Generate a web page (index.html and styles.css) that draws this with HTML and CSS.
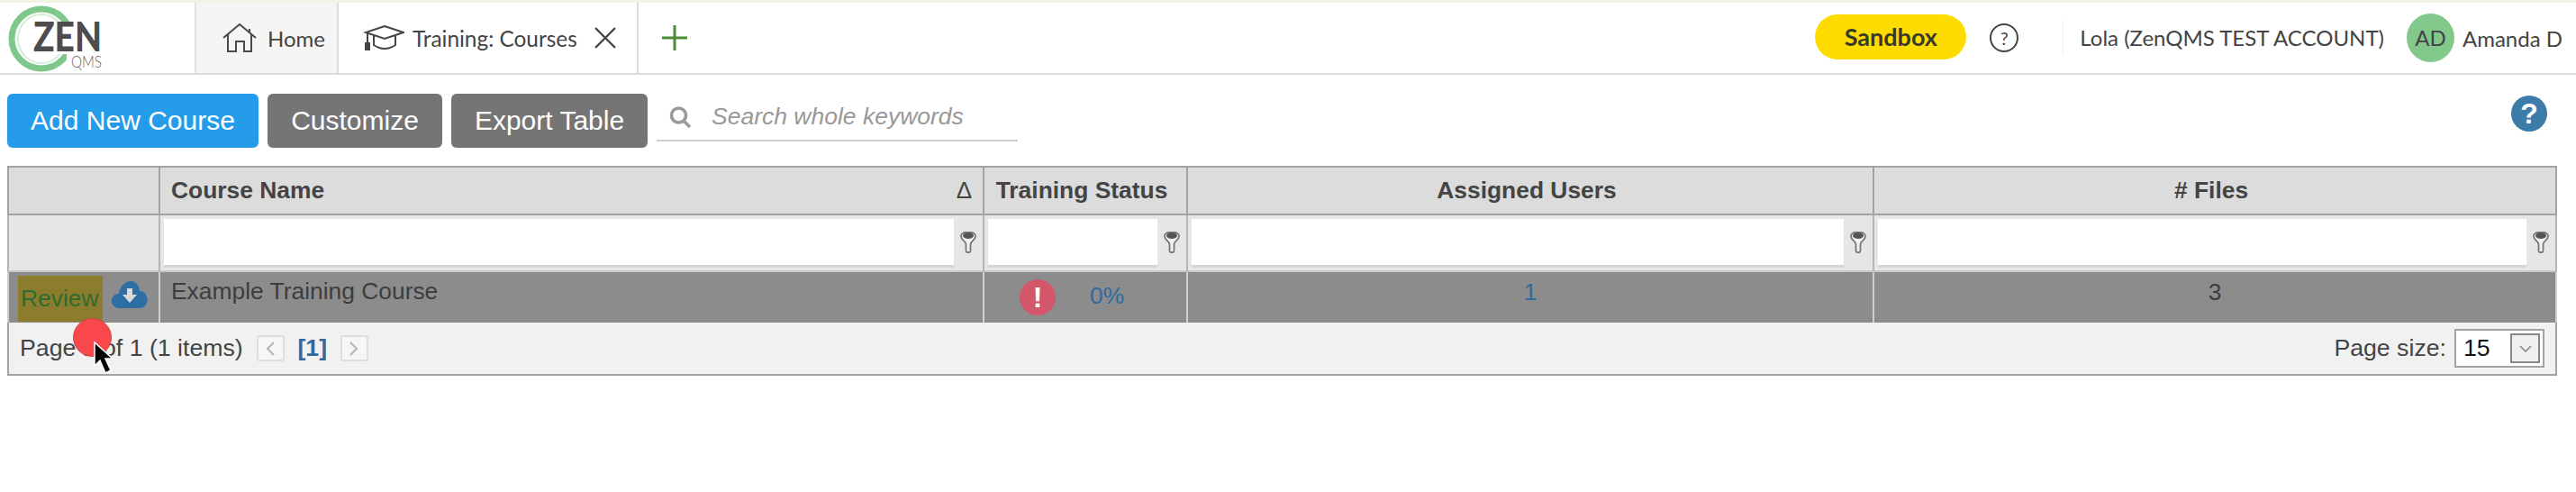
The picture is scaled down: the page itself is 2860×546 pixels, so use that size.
FILE: index.html
```html
<!DOCTYPE html>
<html lang="en">
<head>
  <meta charset="UTF-8" />
  <title>ZenQMS - Training: Courses</title>
  <link rel="stylesheet" href="styles.css">
</head>
<body>

  <!-- Top nav -->
  <header class="topbar">
    <div class="logo">
      <svg width="140" height="78" viewBox="0 0 140 78">
        <ellipse cx="46" cy="40" rx="33" ry="33" fill="none" stroke="#7ec88b" stroke-width="7"/>
        <ellipse cx="46" cy="40" rx="26" ry="27" fill="none" stroke="#d5ecd9" stroke-width="2"/>
        <rect x="34" y="21" width="82" height="36" fill="#fff"/>
        <rect x="74" y="57" width="42" height="20" fill="#fff"/>
        <text x="37" y="54" textLength="76" lengthAdjust="spacingAndGlyphs" class="logo-zen">ZEN</text>
        <text x="79" y="72" textLength="34" lengthAdjust="spacingAndGlyphs" class="logo-qms">QMS</text>
      </svg>
    </div>
    <div class="tab tab-home">
      <svg width="38" height="33" viewBox="0 0 38 33" fill="none" stroke="#4a4a4a" stroke-width="2">
        <path d="M1 16 L19 1 L37 16 M6 12 V31 H15 V20 H24 V31 H32 V12 M30 10 V6"/>
      </svg>
      <span>Home</span>
    </div>
    <div class="tab tab-active">
      <svg width="46" height="28" viewBox="0 0 46 28" fill="none" stroke="#444" stroke-width="2">
        <path d="M24 1 L45 8 L24 15 L3 8 Z M12 12 V22 Q24 30 36 22 V12 M5 9 V20"/>
        <path d="M3 20 H7 V27 H3 Z" fill="#444"/>
      </svg>
      <span>Training: Courses</span>
      <svg class="tab-close" width="26" height="26" viewBox="0 0 26 26" stroke="#444" stroke-width="2.4">
        <path d="M2 2 L24 24 M24 2 L2 24"/>
      </svg>
    </div>
    <div class="tab-add">
      <svg width="28" height="28" viewBox="0 0 28 28" stroke="#4f8a35" stroke-width="3">
        <path d="M14 0 V28 M0 14 H28"/>
      </svg>
    </div>
    <div class="nav-right">
      <div class="sandbox">Sandbox</div>
      <div class="help-ring">?</div>
      <div class="account">Lola (ZenQMS TEST ACCOUNT)</div>
      <div class="avatar">AD</div>
      <div class="user">Amanda D</div>
    </div>
  </header>

  <!-- Toolbar -->
  <div class="toolbar">
    <button class="btn btn-blue">Add New Course</button>
    <button class="btn btn-gray">Customize</button>
    <button class="btn btn-gray">Export Table</button>
    <div class="search">
      <svg width="25" height="24" viewBox="0 0 25 24" fill="none" stroke="#999" stroke-width="3.6">
        <circle cx="10.5" cy="10" r="8"/>
        <path d="M16 16 L23 23"/>
      </svg>
      <span>Search whole keywords</span>
    </div>
    <div class="help-solid">?</div>
  </div>

  <!-- Grid -->
  <table class="grid">
    <colgroup>
      <col class="c1"><col class="c2"><col class="c3"><col class="c4"><col class="c5">
    </colgroup>
    <tr class="head">
      <th></th>
      <th class="left"><div class="sort-cell"><span>Course Name</span><span class="sort">&#916;</span></div></th>
      <th>Training Status</th>
      <th>Assigned Users</th>
      <th># Files</th>
    </tr>
    <tr class="filters">
      <td></td>
      <td><div class="filter"><div class="filter-input"></div><svg class="funnel"><use href="#funnel"/></svg></div></td>
      <td><div class="filter"><div class="filter-input"></div><svg class="funnel"><use href="#funnel"/></svg></div></td>
      <td><div class="filter"><div class="filter-input"></div><svg class="funnel"><use href="#funnel"/></svg></div></td>
      <td><div class="filter"><div class="filter-input"></div><svg class="funnel"><use href="#funnel"/></svg></div></td>
    </tr>
    <tr class="row">
      <td class="actions">
        <div class="actions-in">
          <span class="review">Review</span>
          <svg class="cloud" width="40" height="30" viewBox="0 0 40 30">
            <path d="M9 30 C-3 30 -3 14 8 14 C8 6 16 0 21 0 C27 0 31 5 31 11 C42 11 43 30 31 30 Z" fill="#2f6ea5"/>
            <path d="M17 8 H23 V15 H28 L20 24 L12 15 H17 Z" fill="#d9d9d9"/>
          </svg>
        </div>
      </td>
      <td class="name">Example Training Course</td>
      <td>
        <div class="status">
          <div class="alert">!</div>
          <a class="link">0%</a>
        </div>
      </td>
      <td class="center"><a class="link">1</a></td>
      <td class="center">3</td>
    </tr>
    <tr class="pager">
      <td colspan="5">
        <div class="pager-in">
          <span>Page 1 of 1 (1 items)</span>
          <span class="page-btn">
            <svg width="10" height="16" viewBox="0 0 10 16" fill="none" stroke="#b5b5b5" stroke-width="2"><path d="M9 1 L2 8 L9 15"/></svg>
          </span>
          <span class="page-cur">[1]</span>
          <span class="page-btn">
            <svg width="10" height="16" viewBox="0 0 10 16" fill="none" stroke="#b5b5b5" stroke-width="2"><path d="M1 1 L8 8 L1 15"/></svg>
          </span>
          <span class="page-size">Page size:</span>
          <div class="select">
            <span>15</span>
            <div class="select-btn">
              <svg width="14" height="8" viewBox="0 0 14 8" fill="none" stroke="#888" stroke-width="1.6"><path d="M1 1 L7 7 L13 1"/></svg>
            </div>
          </div>
        </div>
      </td>
    </tr>
  </table>

  <!-- click marker from the screen recording -->
  <div class="click-dot"></div>
  <svg class="pointer" width="24" height="38" viewBox="0 0 24 38">
    <path d="M2 2 V28 L8 22 L14 36 L20 33 L14 20 L22 20 Z" fill="#000" stroke="#fff" stroke-width="1.5"/>
  </svg>

  <svg width="0" height="0" class="defs">
    <symbol id="funnel" viewBox="0 0 20 24">
      <path d="M2 5 C2 -1 18 -1 18 5 C18 10 13 10 12.5 14 V21 C12.5 24 7.5 24 7.5 21 V14 C7 10 2 10 2 5 Z" fill="#f2f2f2" stroke="#777" stroke-width="1.8"/>
      <ellipse cx="10" cy="4.5" rx="6" ry="3.5" fill="#555"/>
    </symbol>
  </svg>

</body>
</html>
```

FILE: styles.css
```css
* {
  margin: 0;
  padding: 0;
  box-sizing: border-box;
}

body {
  font-family: 'Liberation Sans', Arial, sans-serif;
  background: #fff;
  color: #444;
  overflow: hidden;
}

/* Top nav */
.topbar {
  display: flex;
  align-items: stretch;
  height: 83px;
  border-top: 3px solid #f3f3e3;
  border-bottom: 2px solid #dcdcdc;
  font-family: 'Lato', sans-serif;
}

.logo {
  width: 218px;
  border-right: 2px solid #e2e2e2;
}

.logo-zen {
  font-family: 'Lato', sans-serif;
  font-weight: 900;
  font-size: 45px;
  fill: #4d4d4f;
}

.logo-qms {
  font-family: 'Lato', sans-serif;
  font-weight: 300;
  font-size: 17px;
  fill: #666;
}

.tab {
  display: flex;
  align-items: center;
  font-size: 24px;
  color: #444;
}

.tab-home {
  width: 158px;
  padding-left: 29px;
  gap: 12px;
  background: #f5f5f5;
  border-right: 2px solid #dcdcdc;
}

.tab-active {
  width: 333px;
  padding-left: 27px;
  gap: 9px;
  font-size: 24.4px;
  background: #fff;
  border-right: 2px solid #dcdcdc;
}

.tab-close {
  margin-left: 9px;
}

.tab-add {
  display: flex;
  align-items: center;
  padding-left: 26px;
}

.nav-right {
  display: flex;
  align-items: center;
  margin-left: auto;
  padding-right: 15px;
}

.sandbox {
  width: 168px;
  height: 50px;
  line-height: 50px;
  margin-top: -2px;
  border-radius: 25px;
  background: #ffdc00;
  color: #3a3a2a;
  font-size: 27px;
  font-weight: 700;
  text-align: center;
}

.help-ring {
  width: 32px;
  height: 32px;
  line-height: 28px;
  margin-left: 26px;
  border: 2px solid #444;
  border-radius: 50%;
  font-size: 20px;
  text-align: center;
}

.account {
  height: 38px;
  line-height: 38px;
  margin-left: 49px;
  padding-left: 18px;
  border-left: 1px solid #eee;
  font-size: 24px;
}

.avatar {
  width: 53px;
  height: 54px;
  line-height: 54px;
  margin-left: 25px;
  border-radius: 50%;
  background: #82c88a;
  font-size: 24px;
  text-align: center;
}

.user {
  margin-left: 9px;
  font-size: 24px;
}

/* Toolbar */
.toolbar {
  display: flex;
  align-items: flex-start;
  height: 101px;
  padding: 21px 0 0 8px;
}

.btn {
  height: 60px;
  border: none;
  border-radius: 6px;
  color: #fff;
  font-family: 'Liberation Sans', Arial, sans-serif;
  font-size: 30px;
  text-align: center;
}

.btn-blue {
  width: 279px;
  background: #259cea;
}

.btn-gray {
  background: #757575;
  margin-left: 10px;
}

.btn-gray:nth-child(2) {
  width: 194px;
}

.btn-gray:nth-child(3) {
  width: 218px;
}

.search {
  display: flex;
  align-items: center;
  gap: 22px;
  width: 401px;
  height: 53px;
  margin-left: 10px;
  padding-left: 14px;
  border-bottom: 2px solid #cfcfcf;
  color: #999;
  font-size: 26.5px;
  font-style: italic;
}

.help-solid {
  width: 40px;
  height: 40px;
  line-height: 40px;
  margin: 2px 32px 0 auto;
  border-radius: 50%;
  background: #3d7ca8;
  color: #fff;
  font-size: 32px;
  font-weight: 700;
  text-align: center;
}

/* Grid */
.grid {
  table-layout: fixed;
  width: 2829px;
  margin-left: 8px;
  border-collapse: collapse;
  border: 2px solid #a3a3a3;
  font-size: 26.4px;
}

.c1 { width: 168px; }
.c2 { width: 915px; }
.c3 { width: 226px; }
.c4 { width: 762px; }
.c5 { width: 758px; }

.head th {
  height: 53px;
  padding-right: 8px;
  background: #dcdcdc;
  border: 2px solid #a3a3a3;
  color: #444;
  font-size: 26.4px;
  font-weight: 700;
  text-align: center;
}

.head th.left {
  padding: 0 12px;
  text-align: left;
}

.sort-cell {
  display: flex;
  justify-content: space-between;
}

.sort {
  font-size: 26px;
  font-weight: 400;
  line-height: 30px;
}

.filters td {
  height: 63px;
  background: #e6e6e6;
  border-left: 2px solid #b5b5b5;
  border-right: 2px solid #b5b5b5;
}

.filter {
  display: flex;
  align-items: center;
  padding: 0 0 0 4px;
}

.filter-input {
  flex: 1;
  height: 54px;
  background: #fff;
  border-bottom: 3px solid #d6d6d6;
}

.funnel {
  width: 20px;
  height: 24px;
  margin: 0 6px 2px 6px;
}

.row td {
  height: 57px;
  background: #8c8c8c;
  border-top: 2px solid #c9c9c9;
  border-left: 2px solid #d0d0d0;
  border-right: 2px solid #d0d0d0;
  color: #3d3d3d;
  vertical-align: top;
}

.actions-in {
  display: flex;
  align-items: center;
  gap: 10px;
  padding-left: 10px;
  height: 51px;
  margin-top: 4px;
}

.review {
  width: 94px;
  height: 51px;
  line-height: 50px;
  padding-left: 3px;
  background: #8c7c2e;
  color: #2e6b2e;
}

.cloud {
  margin-bottom: 10px;
}

.row td.name {
  padding: 6px 12px;
}

.row td.center {
  padding-top: 7px;
  text-align: center;
}

.status {
  display: flex;
  align-items: center;
  height: 56px;
  padding-left: 39px;
  gap: 38px;
}

.status .link {
  margin-bottom: 4px;
}

.alert {
  width: 40px;
  height: 40px;
  line-height: 40px;
  border-radius: 50%;
  background: #d4566b;
  color: #fff;
  font-size: 32px;
  font-weight: 700;
  text-align: center;
}

.link {
  color: #2e6a9e;
}

.pager td {
  height: 58px;
  background: #f1f1f1;
  color: #444;
  font-size: 26.7px;
}

.pager-in {
  display: flex;
  align-items: center;
  padding: 0 12px;
}

.pager-in > span:first-child {
  margin-right: 15px;
}

.page-btn {
  display: flex;
  align-items: center;
  justify-content: center;
  width: 31px;
  height: 29px;
  border: 2px solid #dedede;
  border-radius: 3px;
  background: #f6f6f6;
}

.page-cur {
  width: 62px;
  color: #2e6a9e;
  font-weight: 700;
  text-align: center;
}

.page-size {
  margin-left: auto;
}

.select {
  display: flex;
  align-items: center;
  justify-content: space-between;
  width: 100px;
  height: 43px;
  margin-left: 9px;
  padding: 0 3px 0 8px;
  border: 2px solid #a3a3a3;
  background: #fff;
  color: #111;
}

.select-btn {
  display: flex;
  align-items: center;
  justify-content: center;
  width: 33px;
  height: 33px;
  border: 2px solid #888;
  background: #f0f0f0;
}

/* Overlays */
.click-dot {
  position: absolute;
  left: 81px;
  top: 353px;
  width: 43px;
  height: 43px;
  border-radius: 50%;
  background: #f9474b;
  border: 1px solid #c84a3a;
}

.pointer {
  position: absolute;
  left: 103px;
  top: 378px;
}

.defs {
  position: absolute;
}
```
